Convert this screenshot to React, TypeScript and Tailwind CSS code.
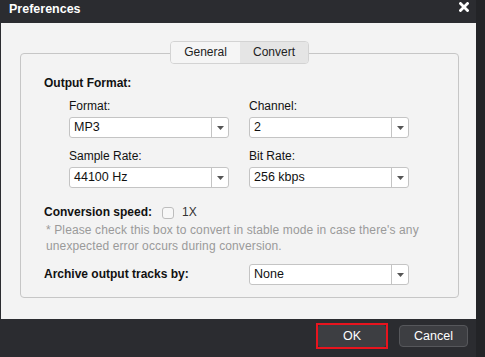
import React from "react";

const font = { fontFamily: '"Liberation Sans", Arial, sans-serif' };

function Caret() {
  return (
    <svg width="7" height="4" viewBox="0 0 7 4">
      <path d="M0 0 H7 L3.5 4 Z" fill="#555" />
    </svg>
  );
}

function Select({ value }: { value: string }) {
  return (
    <div className="flex h-[21px] w-[160px] items-center rounded-[3px] border border-[#c4c4c4] bg-white">
      <span className="flex-1 pl-[4px] text-[12.5px] leading-[15px] text-[#111]">{value}</span>
      <span className="flex h-full w-[17px] items-center justify-center border-l border-[#c4c4c4]">
        <Caret />
      </span>
    </div>
  );
}

function Field({ label, value }: { label: string; value: string }) {
  return (
    <div className="flex flex-col gap-[3px]">
      <span className="text-[12px] leading-[15px] text-[#111]">{label}</span>
      <Select value={value} />
    </div>
  );
}

export default function App() {
  return (
    <div className="flex h-[357px] w-[485px] bg-[#232427]" style={font}>
      <div className="flex w-[476px] flex-col">
        {/* Title bar */}
        <div className="flex h-[23px] items-start justify-between bg-[#2b2c30] pl-[9px] pr-[7px] pt-[2px]">
          <span className="text-[12.5px] font-bold leading-[15px] text-white">Preferences</span>
          <svg width="10" height="10" viewBox="0 0 10 10">
            <path d="M1.5 1.5 L8.5 8.5 M8.5 1.5 L1.5 8.5" stroke="#fff" strokeWidth="2.8" strokeLinecap="square" />
          </svg>
        </div>

        {/* Body */}
        <div className="flex h-[296px] flex-col border-l border-[#2b2c30] bg-[#f3f3f3] pl-[19px] pt-[18px]">
          <div className="relative z-10 -mb-[11px] flex w-[439px] justify-center">
            <div className="flex h-[23px] overflow-hidden rounded-[4px] border border-[#d3d3d3] text-[12px] leading-[15px] text-[#222]">
              <span className="flex w-[69px] items-center justify-center bg-[#f5f5f5]">General</span>
              <span className="flex w-[68px] items-center justify-center bg-[#e5e5e5]">Convert</span>
            </div>
          </div>

          <div className="flex h-[245px] w-[439px] flex-col rounded-[4px] border border-[#c6c6c6] pl-[23px] pt-[22px]">
            <span className="text-[12px] font-bold leading-[15px] text-[#111]">Output Format:</span>

            <div className="mt-[8px] grid w-[340px] grid-cols-[160px_160px] gap-x-[20px] gap-y-[11px] pl-[25px]">
              <Field label="Format:" value="MP3" />
              <Field label="Channel:" value="2" />
              <Field label="Sample Rate:" value="44100 Hz" />
              <Field label="Bit Rate:" value="256 kbps" />
            </div>

            <div className="mt-[17px] flex items-center">
              <span className="text-[12px] font-bold leading-[15px] text-[#111]">Conversion speed:</span>
              <span className="ml-[10px] h-[12px] w-[12px] rounded-[3px] border border-[#bdbdbd] bg-[#f7f7f7]" />
              <span className="ml-[8px] text-[12px] leading-[15px] text-[#333]">1X</span>
            </div>

            <p className="mt-[2px] pl-[2px] text-[12px] leading-[16px] tracking-[0.12px] text-[#9a9a9a]">
              * Please check this box to convert in stable mode in case there's any
              <br />
              unexpected error occurs during conversion.
            </p>

            <div className="mt-[10px] flex items-center">
              <span className="w-[205px] text-[12px] font-bold leading-[15px] text-[#111]">
                Archive output tracks by:
              </span>
              <Select value="None" />
            </div>
          </div>
        </div>

        {/* Footer */}
        <div className="flex h-[38px] items-center justify-end gap-[11px] bg-[#2b2c30] pb-[4px] pr-[8px]">
          <div className="border-2 border-[#e8141e]">
            <button className="flex h-[22px] w-[68px] items-center justify-center rounded-[3px] bg-[#3d3e42] text-[12.5px] text-white">
              OK
            </button>
          </div>
          <button className="flex h-[22px] w-[69px] items-center justify-center rounded-[4px] border border-[#56575b] bg-[#3d3e42] text-[12.5px] text-white">
            Cancel
          </button>
        </div>
      </div>
    </div>
  );
}
